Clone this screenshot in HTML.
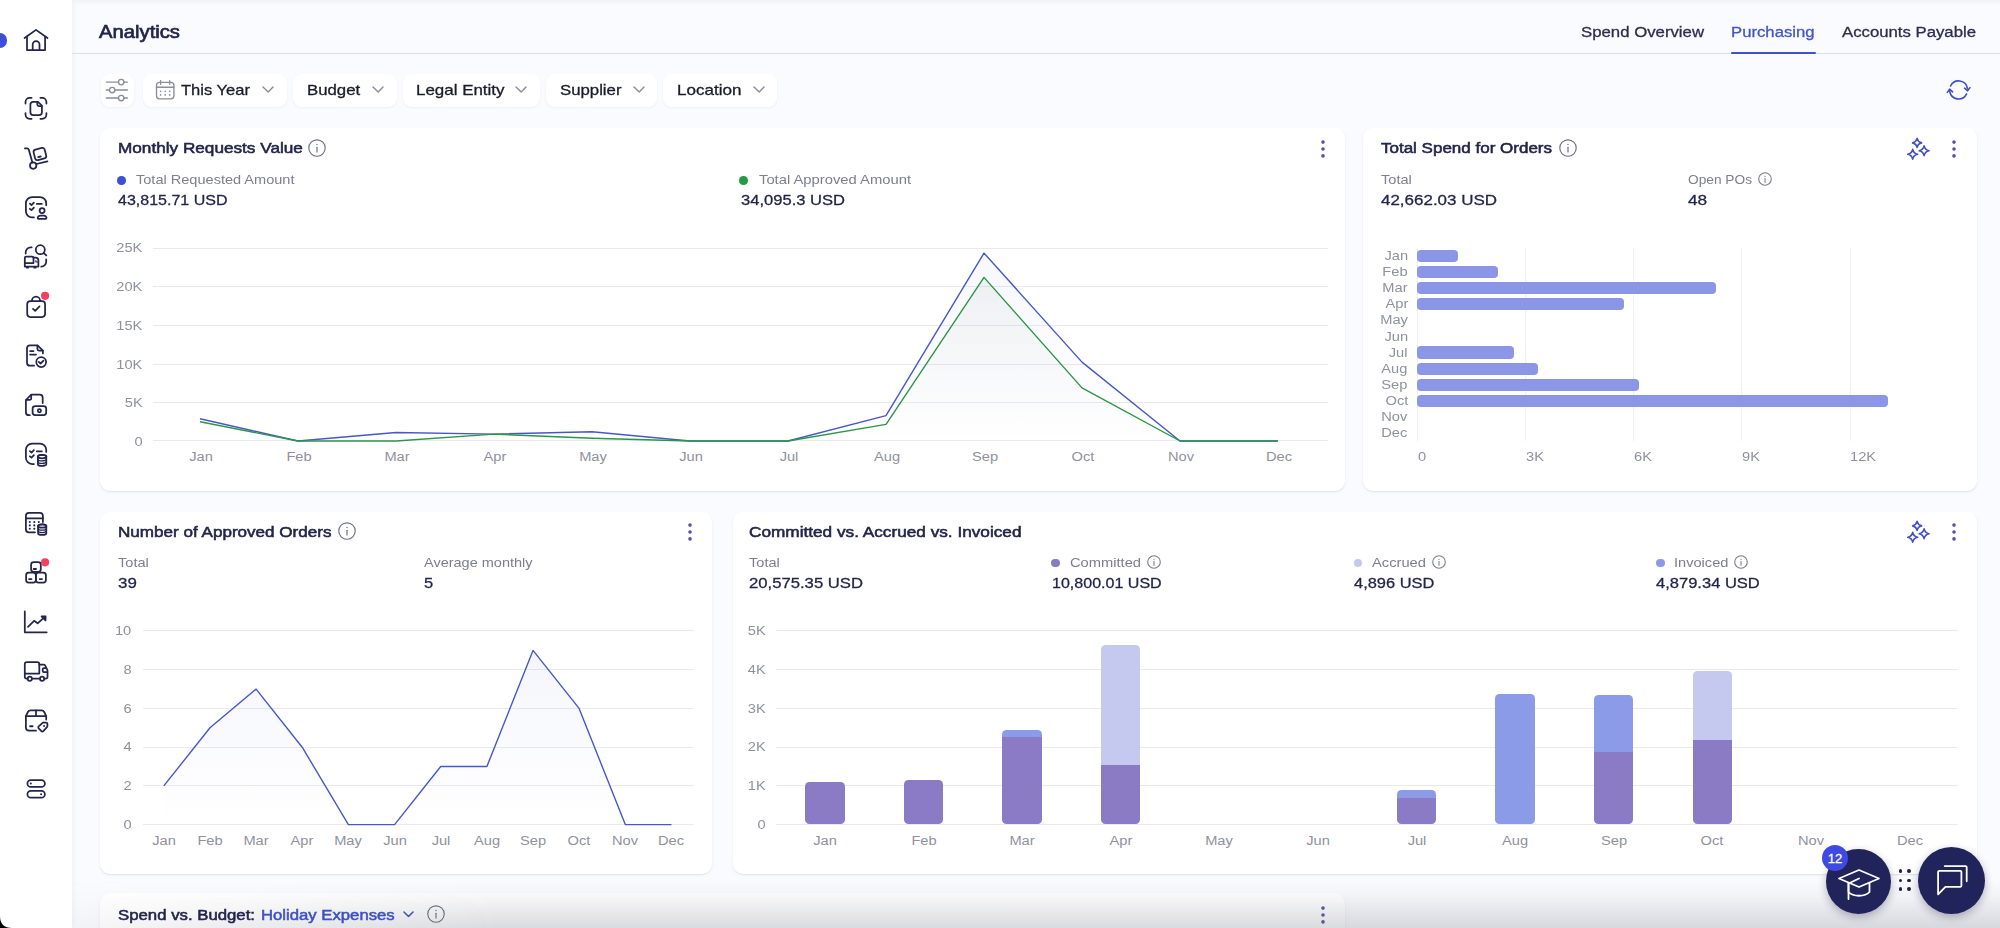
<!DOCTYPE html>
<html lang="en"><head><meta charset="utf-8"><title>Analytics</title>
<style>
html,body{margin:0;padding:0}
body{width:2000px;height:928px;overflow:hidden;position:relative;background:#fafbfe;font-family:"Liberation Sans", Arial, sans-serif;color:#22244b}
.abs{position:absolute}
.card{position:absolute;background:#fff;border-radius:10px;box-shadow:0 1px 1.5px rgba(60,62,80,.10),0 2px 6px rgba(60,62,90,.025)}
.chip{position:absolute;background:#fff;border-radius:9px;box-shadow:0 1px 2px rgba(60,62,80,.045),0 1px 5px rgba(60,62,90,.02)}
svg{position:absolute;overflow:visible}
</style></head><body>
<div class="abs" style="left:0;top:0;width:72px;height:928px;background:#fff;box-shadow:1px 0 6px rgba(40,45,90,.05)"></div>
<div class="abs" style="left:72px;top:53px;width:1928px;height:1px;background:#dcdee5"></div>
<div class="abs" style="left:72px;top:0;width:1928px;height:5px;background:linear-gradient(#f1f2f7,rgba(250,251,254,0))"></div>
<div class="abs" style="left:-7.5px;top:33px;width:14.5px;height:14.5px;border-radius:50%;background:#3d4fd6"></div>
<div class="abs" style="left:1731px;top:51.8px;width:84.5px;height:2.3px;background:#3f51c6;border-radius:1px"></div>
<div class="chip" style="left:100.5px;top:74px;width:33.5px;height:32.5px"></div>
<div class="chip" style="left:143px;top:74px;width:144px;height:32.5px"></div>
<div class="chip" style="left:293px;top:74px;width:104px;height:32.5px"></div>
<div class="chip" style="left:403px;top:74px;width:137px;height:32.5px"></div>
<div class="chip" style="left:546px;top:74px;width:111px;height:32.5px"></div>
<div class="chip" style="left:663px;top:74px;width:114px;height:32.5px"></div>
<svg style="left:262.2px;top:85.8px" width="12" height="7" viewBox="0 0 12 7"><path d="M1 1 L6.2 6.0 L11 1" fill="none" stroke="#8a8c99" stroke-width="1.4" stroke-linecap="round" stroke-linejoin="round"/></svg>
<svg style="left:371.8px;top:85.8px" width="12" height="7" viewBox="0 0 12 7"><path d="M1 1 L6.2 6.0 L11 1" fill="none" stroke="#8a8c99" stroke-width="1.4" stroke-linecap="round" stroke-linejoin="round"/></svg>
<svg style="left:515.2px;top:85.8px" width="12" height="7" viewBox="0 0 12 7"><path d="M1 1 L6.2 6.0 L11 1" fill="none" stroke="#8a8c99" stroke-width="1.4" stroke-linecap="round" stroke-linejoin="round"/></svg>
<svg style="left:632.8px;top:85.8px" width="12" height="7" viewBox="0 0 12 7"><path d="M1 1 L6.2 6.0 L11 1" fill="none" stroke="#8a8c99" stroke-width="1.4" stroke-linecap="round" stroke-linejoin="round"/></svg>
<svg style="left:752.8px;top:85.8px" width="12" height="7" viewBox="0 0 12 7"><path d="M1 1 L6.2 6.0 L11 1" fill="none" stroke="#8a8c99" stroke-width="1.4" stroke-linecap="round" stroke-linejoin="round"/></svg>
<div class="card" style="left:100px;top:127.5px;width:1244.5px;height:363px"></div>
<div class="card" style="left:1363px;top:127.5px;width:614px;height:363px"></div>
<div class="card" style="left:100px;top:511.5px;width:612px;height:362px"></div>
<div class="card" style="left:732.5px;top:511.5px;width:1244.5px;height:362px"></div>
<div class="card" style="left:100px;top:893px;width:1244.5px;height:80px"></div>
<svg style="left:304.5px;top:135.9px" width="24.0" height="24.0" viewBox="-12 -12 24 24"><circle r="8.2" fill="none" stroke="#6b6d84" stroke-width="1.15"/><circle cx="0" cy="-3.44" r="0.71" fill="#6b6d84"/><path d="M0 -0.66 V4.10" stroke="#6b6d84" stroke-width="1.15" stroke-linecap="round"/></svg>
<svg style="left:1318.5px;top:136.5px" width="8" height="24" viewBox="-4 -12 8 24"><circle cy="-6.9" r="1.8" fill="#5650a6"/><circle r="1.8" fill="#5650a6"/><circle cy="6.9" r="1.8" fill="#5650a6"/></svg>
<div class="abs" style="left:117.1px;top:176.1px;width:8.6px;height:8.6px;border-radius:50%;background:#3d4fd6"></div>
<div class="abs" style="left:739.3px;top:176.1px;width:8.6px;height:8.6px;border-radius:50%;background:#259a45"></div>
<div class="abs" style="left:152.5px;top:248.0px;width:1175.5px;height:1px;background:#e9eaef"></div>
<div class="abs" style="left:152.5px;top:286.0px;width:1175.5px;height:1px;background:#e9eaef"></div>
<div class="abs" style="left:152.5px;top:325.0px;width:1175.5px;height:1px;background:#e9eaef"></div>
<div class="abs" style="left:152.5px;top:364.0px;width:1175.5px;height:1px;background:#e9eaef"></div>
<div class="abs" style="left:152.5px;top:402.0px;width:1175.5px;height:1px;background:#e9eaef"></div>
<div class="abs" style="left:152.5px;top:440.0px;width:1175.5px;height:1px;background:#e9eaef"></div>
<svg style="left:0;top:0" width="2000" height="928" viewBox="0 0 2000 928"><defs><linearGradient id="gf1" x1="0" y1="0" x2="0" y2="1"><stop offset="0" stop-color="#7a8a80" stop-opacity=".085"/><stop offset="1" stop-color="#7a8a80" stop-opacity="0"/></linearGradient><linearGradient id="gf1b" x1="0" y1="0" x2="0" y2="1"><stop offset="0" stop-color="#5566cc" stop-opacity=".045"/><stop offset="1" stop-color="#5566cc" stop-opacity="0"/></linearGradient><linearGradient id="gf3" x1="0" y1="0" x2="0" y2="1"><stop offset="0" stop-color="#5566cc" stop-opacity=".06"/><stop offset="1" stop-color="#5566cc" stop-opacity="0"/></linearGradient></defs><polygon points="200.0,418.7 298.0,441.0 396.0,432.5 494.0,434.1 592.0,431.8 690.0,441.0 788.0,441.0 886.0,415.6 984.0,253.1 1082.0,362.1 1180.0,441.0 1278.0,441.0 1278,441 200,441" fill="url(#gf1b)"/><polygon points="200.0,421.8 298.0,441.0 396.0,441.0 494.0,434.1 592.0,438.3 690.0,441.0 788.0,441.0 886.0,424.4 984.0,277.4 1082.0,387.9 1180.0,441.0 1278.0,441.0 1278,441 200,441" fill="url(#gf1)"/><polyline points="200.0,418.7 298.0,441.0 396.0,432.5 494.0,434.1 592.0,431.8 690.0,441.0 788.0,441.0 886.0,415.6 984.0,253.1 1082.0,362.1 1180.0,441.0 1278.0,441.0" fill="none" stroke="#4658c8" stroke-width="1.4" stroke-linejoin="round"/><polyline points="200.0,421.8 298.0,441.0 396.0,441.0 494.0,434.1 592.0,438.3 690.0,441.0 788.0,441.0 886.0,424.4 984.0,277.4 1082.0,387.9 1180.0,441.0 1278.0,441.0" fill="none" stroke="#2c9547" stroke-width="1.4" stroke-linejoin="round"/></svg>
<svg style="left:1556.0px;top:135.9px" width="24.0" height="24.0" viewBox="-12 -12 24 24"><circle r="8.2" fill="none" stroke="#6b6d84" stroke-width="1.15"/><circle cx="0" cy="-3.44" r="0.71" fill="#6b6d84"/><path d="M0 -0.66 V4.10" stroke="#6b6d84" stroke-width="1.15" stroke-linecap="round"/></svg>
<svg style="left:1903.5px;top:134.5px" width="28" height="28" viewBox="-14 -14 28 28"><path d="M-0.90 -10.60 Q-0.09 -6.91 3.60 -6.10 Q-0.09 -5.29 -0.90 -1.60 Q-1.71 -5.29 -5.40 -6.10 Q-1.71 -6.91 -0.90 -10.60ZM6.10 -3.10 Q6.98 0.92 11.00 1.80 Q6.98 2.68 6.10 6.70 Q5.22 2.68 1.20 1.80 Q5.22 0.92 6.10 -3.10ZM-5.30 0.40 Q-4.42 4.42 -0.40 5.30 Q-4.42 6.18 -5.30 10.20 Q-6.18 6.18 -10.20 5.30 Q-6.18 4.42 -5.30 0.40Z" fill="none" stroke="#3f4fc4" stroke-width="1.6" stroke-linejoin="round"/></svg>
<svg style="left:1949.5px;top:136.5px" width="8" height="24" viewBox="-4 -12 8 24"><circle cy="-6.9" r="1.8" fill="#5650a6"/><circle r="1.8" fill="#5650a6"/><circle cy="6.9" r="1.8" fill="#5650a6"/></svg>
<svg style="left:1753.2px;top:167.2px" width="24.0" height="24.0" viewBox="-12 -12 24 24"><circle r="6.3" fill="none" stroke="#7b7d8d" stroke-width="1.10"/><circle cx="0" cy="-2.65" r="0.68" fill="#7b7d8d"/><path d="M0 -0.50 V3.15" stroke="#7b7d8d" stroke-width="1.10" stroke-linecap="round"/></svg>
<div class="abs" style="left:1417px;top:248px;width:1px;height:193px;background:#f0f1f5"></div>
<div class="abs" style="left:1525px;top:248px;width:1px;height:193px;background:#f0f1f5"></div>
<div class="abs" style="left:1633px;top:248px;width:1px;height:193px;background:#f0f1f5"></div>
<div class="abs" style="left:1741px;top:248px;width:1px;height:193px;background:#f0f1f5"></div>
<div class="abs" style="left:1850px;top:248px;width:1px;height:193px;background:#f0f1f5"></div>
<div class="abs" style="left:1416.8px;top:249.6px;width:41.1px;height:12.4px;border-radius:4px;background:#8b96e6"></div>
<div class="abs" style="left:1416.8px;top:265.7px;width:81.1px;height:12.4px;border-radius:4px;background:#8b96e6"></div>
<div class="abs" style="left:1416.8px;top:281.9px;width:299.2px;height:12.4px;border-radius:4px;background:#8b96e6"></div>
<div class="abs" style="left:1416.8px;top:298.0px;width:206.8px;height:12.4px;border-radius:4px;background:#8b96e6"></div>
<div class="abs" style="left:1416.8px;top:346.4px;width:97.2px;height:12.4px;border-radius:4px;background:#8b96e6"></div>
<div class="abs" style="left:1416.8px;top:362.5px;width:121.7px;height:12.4px;border-radius:4px;background:#8b96e6"></div>
<div class="abs" style="left:1416.8px;top:378.6px;width:222.2px;height:12.4px;border-radius:4px;background:#8b96e6"></div>
<div class="abs" style="left:1416.8px;top:394.8px;width:471.1px;height:12.4px;border-radius:4px;background:#8b96e6"></div>
<svg style="left:334.8px;top:519.2px" width="24.0" height="24.0" viewBox="-12 -12 24 24"><circle r="8.2" fill="none" stroke="#6b6d84" stroke-width="1.15"/><circle cx="0" cy="-3.44" r="0.71" fill="#6b6d84"/><path d="M0 -0.66 V4.10" stroke="#6b6d84" stroke-width="1.15" stroke-linecap="round"/></svg>
<svg style="left:685.8px;top:519.8px" width="8" height="24" viewBox="-4 -12 8 24"><circle cy="-6.9" r="1.8" fill="#5650a6"/><circle r="1.8" fill="#5650a6"/><circle cy="6.9" r="1.8" fill="#5650a6"/></svg>
<div class="abs" style="left:143.0px;top:630.0px;width:551.0px;height:1px;background:#e9eaef"></div>
<div class="abs" style="left:143.0px;top:669.0px;width:551.0px;height:1px;background:#e9eaef"></div>
<div class="abs" style="left:143.0px;top:708.0px;width:551.0px;height:1px;background:#e9eaef"></div>
<div class="abs" style="left:143.0px;top:747.0px;width:551.0px;height:1px;background:#e9eaef"></div>
<div class="abs" style="left:143.0px;top:785.0px;width:551.0px;height:1px;background:#e9eaef"></div>
<div class="abs" style="left:143.0px;top:824.0px;width:551.0px;height:1px;background:#e9eaef"></div>
<svg style="left:0;top:0" width="2000" height="928" viewBox="0 0 2000 928"><polygon points="163.8,785.9 210.0,727.8 256.1,689.1 302.2,747.2 348.4,824.6 394.6,824.6 440.7,766.5 486.9,766.5 533.0,650.4 579.1,708.4 625.3,824.6 671.5,824.6 671.5,824.6 163.8,824.6" fill="url(#gf3)"/><polyline points="163.8,785.9 210.0,727.8 256.1,689.1 302.2,747.2 348.4,824.6 394.6,824.6 440.7,766.5 486.9,766.5 533.0,650.4 579.1,708.4 625.3,824.6 671.5,824.6" fill="none" stroke="#4658c8" stroke-width="1.4" stroke-linejoin="round"/></svg>
<svg style="left:1903.5px;top:517.8px" width="28" height="28" viewBox="-14 -14 28 28"><path d="M-0.90 -10.60 Q-0.09 -6.91 3.60 -6.10 Q-0.09 -5.29 -0.90 -1.60 Q-1.71 -5.29 -5.40 -6.10 Q-1.71 -6.91 -0.90 -10.60ZM6.10 -3.10 Q6.98 0.92 11.00 1.80 Q6.98 2.68 6.10 6.70 Q5.22 2.68 1.20 1.80 Q5.22 0.92 6.10 -3.10ZM-5.30 0.40 Q-4.42 4.42 -0.40 5.30 Q-4.42 6.18 -5.30 10.20 Q-6.18 6.18 -10.20 5.30 Q-6.18 4.42 -5.30 0.40Z" fill="none" stroke="#3f4fc4" stroke-width="1.6" stroke-linejoin="round"/></svg>
<svg style="left:1949.5px;top:519.8px" width="8" height="24" viewBox="-4 -12 8 24"><circle cy="-6.9" r="1.8" fill="#5650a6"/><circle r="1.8" fill="#5650a6"/><circle cy="6.9" r="1.8" fill="#5650a6"/></svg>
<div class="abs" style="left:1051.4px;top:559.0px;width:8.4px;height:8.4px;border-radius:50%;background:#8b7bc4"></div>
<svg style="left:1142.3px;top:549.9px" width="24.0" height="24.0" viewBox="-12 -12 24 24"><circle r="6.3" fill="none" stroke="#7b7d8d" stroke-width="1.10"/><circle cx="0" cy="-2.65" r="0.68" fill="#7b7d8d"/><path d="M0 -0.50 V3.15" stroke="#7b7d8d" stroke-width="1.10" stroke-linecap="round"/></svg>
<div class="abs" style="left:1353.8px;top:559.0px;width:8.4px;height:8.4px;border-radius:50%;background:#c5c9f0"></div>
<svg style="left:1427.1px;top:549.9px" width="24.0" height="24.0" viewBox="-12 -12 24 24"><circle r="6.3" fill="none" stroke="#7b7d8d" stroke-width="1.10"/><circle cx="0" cy="-2.65" r="0.68" fill="#7b7d8d"/><path d="M0 -0.50 V3.15" stroke="#7b7d8d" stroke-width="1.10" stroke-linecap="round"/></svg>
<div class="abs" style="left:1656.4px;top:559.0px;width:8.4px;height:8.4px;border-radius:50%;background:#8b9be8"></div>
<svg style="left:1729.3px;top:549.9px" width="24.0" height="24.0" viewBox="-12 -12 24 24"><circle r="6.3" fill="none" stroke="#7b7d8d" stroke-width="1.10"/><circle cx="0" cy="-2.65" r="0.68" fill="#7b7d8d"/><path d="M0 -0.50 V3.15" stroke="#7b7d8d" stroke-width="1.10" stroke-linecap="round"/></svg>
<div class="abs" style="left:776.0px;top:630.0px;width:1182.0px;height:1px;background:#e9eaef"></div>
<div class="abs" style="left:776.0px;top:669.0px;width:1182.0px;height:1px;background:#e9eaef"></div>
<div class="abs" style="left:776.0px;top:708.0px;width:1182.0px;height:1px;background:#e9eaef"></div>
<div class="abs" style="left:776.0px;top:747.0px;width:1182.0px;height:1px;background:#e9eaef"></div>
<div class="abs" style="left:776.0px;top:785.0px;width:1182.0px;height:1px;background:#e9eaef"></div>
<div class="abs" style="left:776.0px;top:824.0px;width:1182.0px;height:1px;background:#e9eaef"></div>
<div class="abs" style="left:805.2px;top:782.0px;width:39.4px;height:41.9px;border-radius:4.5px;overflow:hidden"><div class="abs" style="left:0;top:0.0px;width:100%;height:41.9px;background:#8b7bc4"></div></div>
<div class="abs" style="left:903.8px;top:780.3px;width:39.4px;height:43.6px;border-radius:4.5px;overflow:hidden"><div class="abs" style="left:0;top:0.0px;width:100%;height:43.6px;background:#8b7bc4"></div></div>
<div class="abs" style="left:1002.4px;top:729.6px;width:39.4px;height:94.3px;border-radius:4.5px;overflow:hidden"><div class="abs" style="left:0;top:7.4px;width:100%;height:86.9px;background:#8b7bc4"></div><div class="abs" style="left:0;top:0.0px;width:100%;height:7.4px;background:#8b9be8"></div></div>
<div class="abs" style="left:1101.0px;top:645.2px;width:39.4px;height:178.7px;border-radius:4.5px;overflow:hidden"><div class="abs" style="left:0;top:119.4px;width:100%;height:59.3px;background:#8b7bc4"></div><div class="abs" style="left:0;top:0.0px;width:100%;height:119.4px;background:#c5c9f0"></div></div>
<div class="abs" style="left:1396.8px;top:790.0px;width:39.4px;height:33.9px;border-radius:4.5px;overflow:hidden"><div class="abs" style="left:0;top:7.5px;width:100%;height:26.4px;background:#8b7bc4"></div><div class="abs" style="left:0;top:0.0px;width:100%;height:7.5px;background:#8b9be8"></div></div>
<div class="abs" style="left:1495.4px;top:694.2px;width:39.4px;height:129.7px;border-radius:4.5px;overflow:hidden"><div class="abs" style="left:0;top:0.0px;width:100%;height:129.7px;background:#8b9be8"></div></div>
<div class="abs" style="left:1594.0px;top:695.0px;width:39.4px;height:128.9px;border-radius:4.5px;overflow:hidden"><div class="abs" style="left:0;top:56.8px;width:100%;height:72.1px;background:#8b7bc4"></div><div class="abs" style="left:0;top:0.0px;width:100%;height:56.8px;background:#8b9be8"></div></div>
<div class="abs" style="left:1692.6px;top:670.7px;width:39.4px;height:153.2px;border-radius:4.5px;overflow:hidden"><div class="abs" style="left:0;top:69.2px;width:100%;height:84.0px;background:#8b7bc4"></div><div class="abs" style="left:0;top:0.0px;width:100%;height:69.2px;background:#c5c9f0"></div></div>
<svg style="left:402.5px;top:911.2px" width="11" height="6" viewBox="0 0 11 6"><path d="M1 1 L5.5 5.5 L10 1" fill="none" stroke="#3f51c6" stroke-width="1.6" stroke-linecap="round" stroke-linejoin="round"/></svg>
<svg style="left:424.2px;top:901.9px" width="24.0" height="24.0" viewBox="-12 -12 24 24"><circle r="8.2" fill="none" stroke="#6b6d84" stroke-width="1.15"/><circle cx="0" cy="-3.44" r="0.71" fill="#6b6d84"/><path d="M0 -0.66 V4.10" stroke="#6b6d84" stroke-width="1.15" stroke-linecap="round"/></svg>
<svg style="left:1318.5px;top:902.5px" width="8" height="24" viewBox="-4 -12 8 24"><circle cy="-6.9" r="1.8" fill="#5650a6"/><circle r="1.8" fill="#5650a6"/><circle cy="6.9" r="1.8" fill="#5650a6"/></svg>
<div class="abs" style="left:72px;top:880px;width:1928px;height:48px;background:linear-gradient(rgba(110,112,125,0),rgba(110,112,125,.06) 35%,rgba(110,112,125,.25));-webkit-mask-image:linear-gradient(to right,rgba(0,0,0,.2),#000 22%);mask-image:linear-gradient(to right,rgba(0,0,0,.2),#000 22%);pointer-events:none"></div>
<svg style="left:0;top:916px" width="12" height="12" viewBox="0 0 12 12"><path d="M0 0 Q0 12 12 12 H0Z" fill="#000"/></svg>
<div class="abs" style="left:1825.5px;top:849.0px;width:65px;height:65px;border-radius:50%;background:#20245a;box-shadow:0 3px 8px rgba(20,22,60,.3)"></div>
<div class="abs" style="left:1918.1px;top:847.0px;width:67px;height:67px;border-radius:50%;background:#20245a;box-shadow:0 3px 8px rgba(20,22,60,.3)"></div>
<div class="abs" style="left:1822.0px;top:845.1px;width:26.4px;height:26.4px;border-radius:50%;background:#3f4ae4"></div>
<div class="abs" style="left:1898.5px;top:869.4px;width:3.8px;height:3.8px;border-radius:50%;background:#1e2150"></div>
<div class="abs" style="left:1898.5px;top:878.6px;width:3.8px;height:3.8px;border-radius:50%;background:#1e2150"></div>
<div class="abs" style="left:1898.5px;top:886.9px;width:3.8px;height:3.8px;border-radius:50%;background:#1e2150"></div>
<div class="abs" style="left:1906.8px;top:869.4px;width:3.8px;height:3.8px;border-radius:50%;background:#1e2150"></div>
<div class="abs" style="left:1906.8px;top:878.6px;width:3.8px;height:3.8px;border-radius:50%;background:#1e2150"></div>
<div class="abs" style="left:1906.8px;top:886.9px;width:3.8px;height:3.8px;border-radius:50%;background:#1e2150"></div>
<svg style="left:1835.0px;top:863.0px" width="48" height="40" viewBox="-24 -20 48 40"><g fill="none" stroke="#fff" stroke-width="1.8" stroke-linejoin="round" stroke-linecap="round"><path d="M0 -13 L20 -4.5 L0 4 L-20 -4.5 Z"/><path d="M-10.5 0 V9 C-6 14 6 14 10.5 9 V0"/><path d="M0 -4.5 L-10.5 0.5 V16"/></g></svg>
<svg style="left:1931.6px;top:860.5px" width="40" height="40" viewBox="-20 -20 40 40"><g fill="none" stroke="#fff" stroke-width="1.8" stroke-linejoin="round" stroke-linecap="round"><path d="M-13.9 -9 a1.2 1.2 0 0 1 1.2 -1.2 H8.2 a1.2 1.2 0 0 1 1.2 1.2 V4.7 a1.2 1.2 0 0 1 -1.2 1.2 H-6.6 L-13.9 13.4 Z"/><path d="M-7.3 -14.9 H13.5 a1.2 1.2 0 0 1 1.2 1.2 V0.3"/></g></svg>
<svg style="left:0;top:0" width="72" height="928" viewBox="0 0 72 928"><g fill="none" stroke="#23254d" stroke-width="1.75" stroke-linecap="round" stroke-linejoin="round"><path d="M24.6 38 L36 29.9 L47.5 38"/><path d="M27 36.6 V50 H45.1 V36.6"/><path d="M32.7 50 V44.6 a3.4 3.4 0 0 1 6.8 0 V50"/><path d="M25.5 103.6 V102 a4.2 4.2 0 0 1 4.2 -4.2 H31.6"/><path d="M40.4 97.8 H42.2 a4.2 4.2 0 0 1 4.2 4.2 V103.6"/><path d="M46.4 113 V114.6 a4.2 4.2 0 0 1 -4.2 4.2 H40.4"/><path d="M31.6 118.8 H29.7 a4.2 4.2 0 0 1 -4.2 -4.2 V113"/><path d="M33.2 101.8 H38 L41.9 105.6 V112.2 a2.8 2.8 0 0 1 -2.8 2.8 H33.2 a2.8 2.8 0 0 1 -2.8 -2.8 V104.6 a2.8 2.8 0 0 1 2.8 -2.8Z"/><path d="M37.3 102 V104.4 a1.6 1.6 0 0 0 1.6 1.6 H41.6"/><path d="M24.9 148.4 H27.2 a1.6 1.6 0 0 1 1.55 1.2 L32.4 162.5"/><circle cx="33.2" cy="165.6" r="3.2"/><path d="M36.4 164 L47.4 161.4"/><rect x="-5.7" y="-5.4" width="11.4" height="10.8" rx="2.4" transform="translate(39.9 154) rotate(-14)"/><path d="M38.2 157.1 L40.6 156.5" stroke-width="2"/><path d="M46.2 205.35 V203.25 a6.2 6.2 0 0 0 -6.2 -6.2 H32.1 a6.2 6.2 0 0 0 -6.2 6.2 v8 a6.2 6.2 0 0 0 6.2 6.2 H33.9"/><path d="M29.9 203.70 l1.6 1.4 l2.4 -2.5"/><path d="M29.9 208.80 l1.6 1.4 l2.4 -2.5"/><path d="M36.8 203.90 H41.8"/><circle cx="42.1" cy="210.6" r="2.5"/><path d="M40.3 215.5 H43.9 a2.6 2.6 0 0 1 2.6 2.6 a0.8 0.8 0 0 1 -0.8 0.8 H38.5 a0.8 0.8 0 0 1 -0.8 -0.8 a2.6 2.6 0 0 1 2.6 -2.6Z"/><path d="M25.7 253.6 V252.3 a5 5 0 0 1 5 -5 H31.7"/><circle cx="40.3" cy="249.7" r="4.5"/><path d="M43.6 253 L46.3 255.4"/><path d="M46.2 259.4 V261.7 a5 5 0 0 1 -5 5 H41.2"/><path d="M24.8 258 a1.4 1.4 0 0 1 1.4 -1.4 H32.1 a1.4 1.4 0 0 1 1.4 1.4 V263 H24.8Z"/><path d="M33.5 257.7 H35.6 a2.8 2.8 0 0 1 2.8 2.8 V266.6 H24.8 V263"/><path d="M26.6 267.7 H28.4 M34 267.7 H35.8" stroke-width="1.5"/><path d="M35.9 260.6 V262 H37.6" stroke-width="1.1"/><rect x="27.2" y="301" width="17.9" height="16" rx="3.2"/><path d="M31.9 301 a4.1 4.3 0 0 1 8.2 0"/><path d="M33 308.8 L35.2 310.9 L39.5 306.4"/><path d="M42.9 353.4 V350.6 L37.6 345.3 H30 a3 3 0 0 0 -3 3 V362.7 a3 3 0 0 0 3 3 H34.1"/><path d="M37.4 345.6 V349 a1.5 1.5 0 0 0 1.5 1.5 H42.6"/><path d="M30.1 351.1 H33.5 M30.1 354.6 H36"/><circle cx="41.2" cy="362.1" r="4.9"/><path d="M38.8 361.9 L40.6 363.5 L43.5 360.7"/><path d="M42.7 403 V397.7 a3 3 0 0 0 -3 -3 H31.2 L25.9 400 V412.2 a3 3 0 0 0 3 3 H29.8"/><path d="M31.2 395 V398.4 a1.5 1.5 0 0 1 -1.5 1.5 H26.2"/><rect x="32.6" y="406.1" width="13.6" height="9.1" rx="2.6"/><circle cx="39.4" cy="410.7" r="1.6"/><path d="M46.2 451.90 V449.80 a6.2 6.2 0 0 0 -6.2 -6.2 H32.1 a6.2 6.2 0 0 0 -6.2 6.2 v8 a6.2 6.2 0 0 0 6.2 6.2 H33.9"/><path d="M29.9 451.20 l1.6 1.4 l2.4 -2.5"/><path d="M29.9 456.30 l1.6 1.4 l2.4 -2.5"/><path d="M36.8 451.40 H41.8"/><ellipse cx="42.10" cy="456.60" rx="4.20" ry="1.70" fill="#fff"/><path d="M37.90 456.60 V464.20 A4.20 1.70 0 0 0 46.30 464.20 V456.60" fill="#fff"/><ellipse cx="42.10" cy="456.60" rx="4.20" ry="1.70"/><path d="M37.90 459.13 A4.20 1.70 0 0 0 46.30 459.13" stroke-width="1.3"/><path d="M37.90 461.67 A4.20 1.70 0 0 0 46.30 461.67" stroke-width="1.3"/><path d="M42.9 522 V515.9 a3 3 0 0 0 -3 -3 H28.9 a3 3 0 0 0 -3 3 V529.3 a3 3 0 0 0 3 3 H35"/><path d="M25.9 518.3 H42.9"/><circle cx="29.8" cy="522.0" r="1.05" fill="#23254d" stroke="none"/><circle cx="34.3" cy="522.0" r="1.05" fill="#23254d" stroke="none"/><circle cx="38.8" cy="522.0" r="1.05" fill="#23254d" stroke="none"/><circle cx="29.8" cy="525.4" r="1.05" fill="#23254d" stroke="none"/><circle cx="34.3" cy="525.4" r="1.05" fill="#23254d" stroke="none"/><circle cx="29.8" cy="528.7" r="1.05" fill="#23254d" stroke="none"/><circle cx="34.3" cy="528.7" r="1.05" fill="#23254d" stroke="none"/><ellipse cx="42.20" cy="526.00" rx="4.10" ry="1.70" fill="#fff"/><path d="M38.10 526.00 V533.30 A4.10 1.70 0 0 0 46.30 533.30 V526.00" fill="#fff"/><ellipse cx="42.20" cy="526.00" rx="4.10" ry="1.70"/><path d="M38.10 528.43 A4.10 1.70 0 0 0 46.30 528.43" stroke-width="1.3"/><path d="M38.10 530.87 A4.10 1.70 0 0 0 46.30 530.87" stroke-width="1.3"/><rect x="31.1" y="562" width="9.7" height="9.8" rx="2.6"/><rect x="26.1" y="572.6" width="9.8" height="10" rx="2.6"/><rect x="35.9" y="572.6" width="10" height="10" rx="2.6"/><path d="M33.7 569 H36 M29.1 579.1 H31.4 M39.7 579.1 H42" stroke-width="1.9"/><path d="M24.8 611.3 V632.3 H46.7"/><path d="M28 626.9 L34.1 620.8 L37.6 623.3 L44.6 617.2"/><path d="M41.6 616.3 L45.6 616.4 L45.5 620.4Z" fill="#23254d"/><path d="M24.8 673.6 V664.2 a2 2 0 0 1 2 -2 H37.3 a2 2 0 0 1 2 2 V673.6Z"/><path d="M24.8 673.6 V677 a1.6 1.6 0 0 0 1.6 1.6 H27.6 M32 678.6 H39.9 M44.3 678.6 H45.9 a1.6 1.6 0 0 0 1.6 -1.6 V670.4 L45.3 665.7 a1.8 1.8 0 0 0 -1.6 -1.1 H39.3"/><circle cx="29.8" cy="678.8" r="2.1"/><circle cx="42.1" cy="678.8" r="2.1"/><path d="M47.3 672.2 H43.9 a1.2 1.2 0 0 1 -1.2 -1.2 V669.2 a1.2 1.2 0 0 1 1.2 -1.2 H46.2"/><path d="M46.2 719.5 V716.1 L44.2 712 a3 3 0 0 0 -2.7 -1.7 H30.6 a3 3 0 0 0 -2.7 1.7 L25.9 716.1 V727.5 a3.2 3.2 0 0 0 3.2 3.2 H36"/><path d="M25.9 716.1 H46.2 M36 710.3 V716.1"/><path d="M30.1 726.3 H32.6" stroke-width="1.9"/><path d="M38.7 726.4 L42.6 722.9 a1.6 1.6 0 0 1 1.1 -0.4 H46 a1.4 1.4 0 0 1 1.4 1.4 V726 a1.6 1.6 0 0 1 -0.45 1.1 L43.3 731.2 a1.3 1.3 0 0 1 -1.9 0 L38.7 728.3 a1.3 1.3 0 0 1 0 -1.9Z"/><circle cx="44.1" cy="726" r="0.95" fill="#23254d" stroke="none"/><rect x="27.4" y="780" width="17.5" height="6.9" rx="3.45"/><rect x="27.4" y="790.8" width="17.5" height="6.9" rx="3.45"/><circle cx="30.8" cy="783.45" r="1.05" fill="#23254d" stroke="none"/><circle cx="41.1" cy="794.25" r="1.05" fill="#23254d" stroke="none"/></g><circle cx="45.1" cy="295.8" r="4.1" fill="#f4405f"/><circle cx="45.1" cy="562.3" r="4.1" fill="#f4405f"/></svg>
<svg style="left:0;top:0" width="300" height="120" viewBox="0 0 300 120"><g fill="none" stroke="#8b8d99" stroke-width="1.35" stroke-linecap="round" stroke-linejoin="round"><path d="M106.3 82.1 H118.4 M124 82.1 H127.4 M106.3 90 H109.4 M115 90 H127.4 M106.3 98 H118.4 M124 98 H127.4"/><circle cx="121.2" cy="82.1" r="2.7"/><circle cx="112.2" cy="90" r="2.7"/><circle cx="121.2" cy="98" r="2.7"/><rect x="156.5" y="82.3" width="17.4" height="16.5" rx="3"/><path d="M156.5 87.2 H173.9 M160.6 80.7 V84.2 M169.7 80.7 V84.2"/></g><circle cx="160.6" cy="91.3" r="0.85" fill="#8b8d99"/><circle cx="160.6" cy="94.9" r="0.85" fill="#8b8d99"/><circle cx="165.2" cy="91.3" r="0.85" fill="#8b8d99"/><circle cx="165.2" cy="94.9" r="0.85" fill="#8b8d99"/><circle cx="169.7" cy="91.3" r="0.85" fill="#8b8d99"/><circle cx="169.7" cy="94.9" r="0.85" fill="#8b8d99"/></svg>
<svg style="left:1940px;top:72px" width="36" height="36" viewBox="1940 72 36 36"><g fill="none" stroke="#3f4fc4" stroke-width="1.6" stroke-linecap="round" stroke-linejoin="round"><path d="M1950.6 86 A8.9 8.9 0 0 1 1967.4 88.4"/><path d="M1964.6 88.2 L1967.6 90.8 L1969.9 87.6"/><path d="M1966.6 93.9 A8.9 8.9 0 0 1 1949.8 91.5"/><path d="M1952.6 91.8 L1949.6 89.2 L1947.3 92.4"/></g></svg>
<span id="t0" style="position:absolute;white-space:nowrap;line-height:1;top:23.22px;font-size:18.40px;font-weight:400;color:#22244b;-webkit-text-stroke:0.65px #22244b;left:99.00px;transform-origin:0 84.6%;transform:scale(1.1006,1.000);">Analytics</span>
<span id="t1" style="position:absolute;white-space:nowrap;line-height:1;top:24.35px;font-size:15.30px;font-weight:400;color:#2c2e4e;-webkit-text-stroke:0.30px #2c2e4e;left:1580.50px;transform-origin:0 84.6%;transform:scale(1.0959,1.000);">Spend Overview</span>
<span id="t2" style="position:absolute;white-space:nowrap;line-height:1;top:24.35px;font-size:15.30px;font-weight:400;color:#4355c8;-webkit-text-stroke:0.30px #4355c8;left:1731.30px;transform-origin:0 84.6%;transform:scale(1.0924,1.000);">Purchasing</span>
<span id="t3" style="position:absolute;white-space:nowrap;line-height:1;top:24.35px;font-size:15.30px;font-weight:400;color:#2c2e4e;-webkit-text-stroke:0.30px #2c2e4e;left:1842.40px;transform-origin:0 84.6%;transform:scale(1.0943,1.000);">Accounts Payable</span>
<span id="t4" style="position:absolute;white-space:nowrap;line-height:1;top:82.67px;font-size:14.80px;font-weight:400;color:#1b1c2a;-webkit-text-stroke:0.30px #1b1c2a;left:181.30px;transform-origin:0 84.6%;transform:scale(1.1166,1.000);">This Year</span>
<span id="t5" style="position:absolute;white-space:nowrap;line-height:1;top:82.67px;font-size:14.80px;font-weight:400;color:#1b1c2a;-webkit-text-stroke:0.30px #1b1c2a;left:306.60px;transform-origin:0 84.6%;transform:scale(1.1342,1.000);">Budget</span>
<span id="t6" style="position:absolute;white-space:nowrap;line-height:1;top:82.67px;font-size:14.80px;font-weight:400;color:#1b1c2a;-webkit-text-stroke:0.30px #1b1c2a;left:415.50px;transform-origin:0 84.6%;transform:scale(1.1445,1.000);">Legal Entity</span>
<span id="t7" style="position:absolute;white-space:nowrap;line-height:1;top:82.67px;font-size:14.80px;font-weight:400;color:#1b1c2a;-webkit-text-stroke:0.30px #1b1c2a;left:559.50px;transform-origin:0 84.6%;transform:scale(1.1327,1.000);">Supplier</span>
<span id="t8" style="position:absolute;white-space:nowrap;line-height:1;top:82.67px;font-size:14.80px;font-weight:400;color:#1b1c2a;-webkit-text-stroke:0.30px #1b1c2a;left:677.00px;transform-origin:0 84.6%;transform:scale(1.1528,1.000);">Location</span>
<span id="t9" style="position:absolute;white-space:nowrap;line-height:1;top:140.18px;font-size:15.50px;font-weight:400;color:#22244b;-webkit-text-stroke:0.55px #22244b;left:117.50px;transform-origin:0 84.6%;transform:scale(1.1080,1.000);">Monthly Requests Value</span>
<span id="t10" style="position:absolute;white-space:nowrap;line-height:1;top:174.15px;font-size:12.70px;font-weight:400;color:#7e7d92;left:135.50px;transform-origin:0 84.6%;transform:scale(1.1465,1.000);">Total Requested Amount</span>
<span id="t11" style="position:absolute;white-space:nowrap;line-height:1;top:192.26px;font-size:15.40px;font-weight:400;color:#22244b;-webkit-text-stroke:0.28px #22244b;left:117.50px;transform-origin:0 84.6%;transform:scale(1.0404,1.000);">43,815.71 USD</span>
<span id="t12" style="position:absolute;white-space:nowrap;line-height:1;top:174.15px;font-size:12.70px;font-weight:400;color:#7e7d92;left:758.50px;transform-origin:0 84.6%;transform:scale(1.1649,1.000);">Total Approved Amount</span>
<span id="t13" style="position:absolute;white-space:nowrap;line-height:1;top:192.26px;font-size:15.40px;font-weight:400;color:#22244b;-webkit-text-stroke:0.28px #22244b;left:740.50px;transform-origin:0 84.6%;transform:scale(1.0756,1.000);">34,095.3 USD</span>
<span id="t14" style="position:absolute;white-space:nowrap;line-height:1;top:241.40px;font-size:13.70px;font-weight:400;color:#8f919d;right:1857.50px;transform-origin:100% 84.6%;transform:scale(1.0700,1.000);">25K</span>
<span id="t15" style="position:absolute;white-space:nowrap;line-height:1;top:279.90px;font-size:13.70px;font-weight:400;color:#8f919d;right:1857.50px;transform-origin:100% 84.6%;transform:scale(1.0700,1.000);">20K</span>
<span id="t16" style="position:absolute;white-space:nowrap;line-height:1;top:318.90px;font-size:13.70px;font-weight:400;color:#8f919d;right:1857.50px;transform-origin:100% 84.6%;transform:scale(1.0700,1.000);">15K</span>
<span id="t17" style="position:absolute;white-space:nowrap;line-height:1;top:357.90px;font-size:13.70px;font-weight:400;color:#8f919d;right:1857.50px;transform-origin:100% 84.6%;transform:scale(1.0700,1.000);">10K</span>
<span id="t18" style="position:absolute;white-space:nowrap;line-height:1;top:396.40px;font-size:13.70px;font-weight:400;color:#8f919d;right:1857.50px;transform-origin:100% 84.6%;transform:scale(1.0700,1.000);">5K</span>
<span id="t19" style="position:absolute;white-space:nowrap;line-height:1;top:435.40px;font-size:13.70px;font-weight:400;color:#8f919d;right:1857.50px;transform-origin:100% 84.6%;transform:scale(1.0700,1.000);">0</span>
<span id="t20" style="position:absolute;white-space:nowrap;line-height:1;top:450.10px;font-size:13.70px;font-weight:400;color:#8f919d;left:200.50px;transform-origin:50% 84.6%;transform:translateX(-50%) scale(1.0700,1.000);">Jan</span>
<span id="t21" style="position:absolute;white-space:nowrap;line-height:1;top:450.10px;font-size:13.70px;font-weight:400;color:#8f919d;left:298.50px;transform-origin:50% 84.6%;transform:translateX(-50%) scale(1.0700,1.000);">Feb</span>
<span id="t22" style="position:absolute;white-space:nowrap;line-height:1;top:450.10px;font-size:13.70px;font-weight:400;color:#8f919d;left:396.50px;transform-origin:50% 84.6%;transform:translateX(-50%) scale(1.0700,1.000);">Mar</span>
<span id="t23" style="position:absolute;white-space:nowrap;line-height:1;top:450.10px;font-size:13.70px;font-weight:400;color:#8f919d;left:494.50px;transform-origin:50% 84.6%;transform:translateX(-50%) scale(1.0700,1.000);">Apr</span>
<span id="t24" style="position:absolute;white-space:nowrap;line-height:1;top:450.10px;font-size:13.70px;font-weight:400;color:#8f919d;left:592.50px;transform-origin:50% 84.6%;transform:translateX(-50%) scale(1.0700,1.000);">May</span>
<span id="t25" style="position:absolute;white-space:nowrap;line-height:1;top:450.10px;font-size:13.70px;font-weight:400;color:#8f919d;left:690.50px;transform-origin:50% 84.6%;transform:translateX(-50%) scale(1.0700,1.000);">Jun</span>
<span id="t26" style="position:absolute;white-space:nowrap;line-height:1;top:450.10px;font-size:13.70px;font-weight:400;color:#8f919d;left:788.50px;transform-origin:50% 84.6%;transform:translateX(-50%) scale(1.0700,1.000);">Jul</span>
<span id="t27" style="position:absolute;white-space:nowrap;line-height:1;top:450.10px;font-size:13.70px;font-weight:400;color:#8f919d;left:886.50px;transform-origin:50% 84.6%;transform:translateX(-50%) scale(1.0700,1.000);">Aug</span>
<span id="t28" style="position:absolute;white-space:nowrap;line-height:1;top:450.10px;font-size:13.70px;font-weight:400;color:#8f919d;left:984.50px;transform-origin:50% 84.6%;transform:translateX(-50%) scale(1.0700,1.000);">Sep</span>
<span id="t29" style="position:absolute;white-space:nowrap;line-height:1;top:450.10px;font-size:13.70px;font-weight:400;color:#8f919d;left:1082.50px;transform-origin:50% 84.6%;transform:translateX(-50%) scale(1.0700,1.000);">Oct</span>
<span id="t30" style="position:absolute;white-space:nowrap;line-height:1;top:450.10px;font-size:13.70px;font-weight:400;color:#8f919d;left:1180.50px;transform-origin:50% 84.6%;transform:translateX(-50%) scale(1.0700,1.000);">Nov</span>
<span id="t31" style="position:absolute;white-space:nowrap;line-height:1;top:450.10px;font-size:13.70px;font-weight:400;color:#8f919d;left:1278.50px;transform-origin:50% 84.6%;transform:translateX(-50%) scale(1.0700,1.000);">Dec</span>
<span id="t32" style="position:absolute;white-space:nowrap;line-height:1;top:140.18px;font-size:15.50px;font-weight:400;color:#22244b;-webkit-text-stroke:0.55px #22244b;left:1381.00px;transform-origin:0 84.6%;transform:scale(1.0965,1.000);">Total Spend for Orders</span>
<span id="t33" style="position:absolute;white-space:nowrap;line-height:1;top:174.15px;font-size:12.70px;font-weight:400;color:#7e7d92;left:1381.00px;transform-origin:0 84.6%;transform:scale(1.1487,1.000);">Total</span>
<span id="t34" style="position:absolute;white-space:nowrap;line-height:1;top:192.26px;font-size:15.40px;font-weight:400;color:#22244b;-webkit-text-stroke:0.28px #22244b;left:1381.00px;transform-origin:0 84.6%;transform:scale(1.1021,1.000);">42,662.03 USD</span>
<span id="t35" style="position:absolute;white-space:nowrap;line-height:1;top:174.15px;font-size:12.70px;font-weight:400;color:#7e7d92;left:1688.00px;transform-origin:0 84.6%;transform:scale(1.0802,1.000);">Open POs</span>
<span id="t36" style="position:absolute;white-space:nowrap;line-height:1;top:192.26px;font-size:15.40px;font-weight:400;color:#22244b;-webkit-text-stroke:0.28px #22244b;left:1688.00px;transform-origin:0 84.6%;transform:scale(1.1212,1.000);">48</span>
<span id="t37" style="position:absolute;white-space:nowrap;line-height:1;top:450.10px;font-size:13.70px;font-weight:400;color:#8f919d;left:1417.70px;transform-origin:0 84.6%;transform:scale(1.0700,1.000);">0</span>
<span id="t38" style="position:absolute;white-space:nowrap;line-height:1;top:450.10px;font-size:13.70px;font-weight:400;color:#8f919d;left:1525.85px;transform-origin:0 84.6%;transform:scale(1.0700,1.000);">3K</span>
<span id="t39" style="position:absolute;white-space:nowrap;line-height:1;top:450.10px;font-size:13.70px;font-weight:400;color:#8f919d;left:1634.00px;transform-origin:0 84.6%;transform:scale(1.0700,1.000);">6K</span>
<span id="t40" style="position:absolute;white-space:nowrap;line-height:1;top:450.10px;font-size:13.70px;font-weight:400;color:#8f919d;left:1742.15px;transform-origin:0 84.6%;transform:scale(1.0700,1.000);">9K</span>
<span id="t41" style="position:absolute;white-space:nowrap;line-height:1;top:450.10px;font-size:13.70px;font-weight:400;color:#8f919d;left:1850.30px;transform-origin:0 84.6%;transform:scale(1.0700,1.000);">12K</span>
<span id="t42" style="position:absolute;white-space:nowrap;line-height:1;top:248.90px;font-size:13.70px;font-weight:400;color:#8f919d;right:592.20px;transform-origin:100% 84.6%;transform:scale(1.0700,1.000);">Jan</span>
<span id="t43" style="position:absolute;white-space:nowrap;line-height:1;top:265.03px;font-size:13.70px;font-weight:400;color:#8f919d;right:592.20px;transform-origin:100% 84.6%;transform:scale(1.0700,1.000);">Feb</span>
<span id="t44" style="position:absolute;white-space:nowrap;line-height:1;top:281.16px;font-size:13.70px;font-weight:400;color:#8f919d;right:592.20px;transform-origin:100% 84.6%;transform:scale(1.0700,1.000);">Mar</span>
<span id="t45" style="position:absolute;white-space:nowrap;line-height:1;top:297.29px;font-size:13.70px;font-weight:400;color:#8f919d;right:592.20px;transform-origin:100% 84.6%;transform:scale(1.0700,1.000);">Apr</span>
<span id="t46" style="position:absolute;white-space:nowrap;line-height:1;top:313.42px;font-size:13.70px;font-weight:400;color:#8f919d;right:592.20px;transform-origin:100% 84.6%;transform:scale(1.0700,1.000);">May</span>
<span id="t47" style="position:absolute;white-space:nowrap;line-height:1;top:329.55px;font-size:13.70px;font-weight:400;color:#8f919d;right:592.20px;transform-origin:100% 84.6%;transform:scale(1.0700,1.000);">Jun</span>
<span id="t48" style="position:absolute;white-space:nowrap;line-height:1;top:345.68px;font-size:13.70px;font-weight:400;color:#8f919d;right:592.20px;transform-origin:100% 84.6%;transform:scale(1.0700,1.000);">Jul</span>
<span id="t49" style="position:absolute;white-space:nowrap;line-height:1;top:361.81px;font-size:13.70px;font-weight:400;color:#8f919d;right:592.20px;transform-origin:100% 84.6%;transform:scale(1.0700,1.000);">Aug</span>
<span id="t50" style="position:absolute;white-space:nowrap;line-height:1;top:377.94px;font-size:13.70px;font-weight:400;color:#8f919d;right:592.20px;transform-origin:100% 84.6%;transform:scale(1.0700,1.000);">Sep</span>
<span id="t51" style="position:absolute;white-space:nowrap;line-height:1;top:394.07px;font-size:13.70px;font-weight:400;color:#8f919d;right:592.20px;transform-origin:100% 84.6%;transform:scale(1.0700,1.000);">Oct</span>
<span id="t52" style="position:absolute;white-space:nowrap;line-height:1;top:410.20px;font-size:13.70px;font-weight:400;color:#8f919d;right:592.20px;transform-origin:100% 84.6%;transform:scale(1.0700,1.000);">Nov</span>
<span id="t53" style="position:absolute;white-space:nowrap;line-height:1;top:426.33px;font-size:13.70px;font-weight:400;color:#8f919d;right:592.20px;transform-origin:100% 84.6%;transform:scale(1.0700,1.000);">Dec</span>
<span id="t54" style="position:absolute;white-space:nowrap;line-height:1;top:523.68px;font-size:15.50px;font-weight:400;color:#22244b;-webkit-text-stroke:0.55px #22244b;left:117.50px;transform-origin:0 84.6%;transform:scale(1.1014,1.000);">Number of Approved Orders</span>
<span id="t55" style="position:absolute;white-space:nowrap;line-height:1;top:556.55px;font-size:12.70px;font-weight:400;color:#7e7d92;left:117.50px;transform-origin:0 84.6%;transform:scale(1.1487,1.000);">Total</span>
<span id="t56" style="position:absolute;white-space:nowrap;line-height:1;top:575.36px;font-size:15.40px;font-weight:400;color:#22244b;-webkit-text-stroke:0.28px #22244b;left:117.80px;transform-origin:0 84.6%;transform:scale(1.0978,1.000);">39</span>
<span id="t57" style="position:absolute;white-space:nowrap;line-height:1;top:556.55px;font-size:12.70px;font-weight:400;color:#7e7d92;left:424.30px;transform-origin:0 84.6%;transform:scale(1.1423,1.000);">Average monthly</span>
<span id="t58" style="position:absolute;white-space:nowrap;line-height:1;top:575.36px;font-size:15.40px;font-weight:400;color:#22244b;-webkit-text-stroke:0.28px #22244b;left:424.30px;transform-origin:0 84.6%;transform:scale(1.0700,1.000);">5</span>
<span id="t59" style="position:absolute;white-space:nowrap;line-height:1;top:624.20px;font-size:13.70px;font-weight:400;color:#8f919d;right:1868.50px;transform-origin:100% 84.6%;transform:scale(1.0700,1.000);">10</span>
<span id="t60" style="position:absolute;white-space:nowrap;line-height:1;top:662.90px;font-size:13.70px;font-weight:400;color:#8f919d;right:1868.50px;transform-origin:100% 84.6%;transform:scale(1.0700,1.000);">8</span>
<span id="t61" style="position:absolute;white-space:nowrap;line-height:1;top:701.60px;font-size:13.70px;font-weight:400;color:#8f919d;right:1868.50px;transform-origin:100% 84.6%;transform:scale(1.0700,1.000);">6</span>
<span id="t62" style="position:absolute;white-space:nowrap;line-height:1;top:740.30px;font-size:13.70px;font-weight:400;color:#8f919d;right:1868.50px;transform-origin:100% 84.6%;transform:scale(1.0700,1.000);">4</span>
<span id="t63" style="position:absolute;white-space:nowrap;line-height:1;top:779.00px;font-size:13.70px;font-weight:400;color:#8f919d;right:1868.50px;transform-origin:100% 84.6%;transform:scale(1.0700,1.000);">2</span>
<span id="t64" style="position:absolute;white-space:nowrap;line-height:1;top:817.80px;font-size:13.70px;font-weight:400;color:#8f919d;right:1868.50px;transform-origin:100% 84.6%;transform:scale(1.0700,1.000);">0</span>
<span id="t65" style="position:absolute;white-space:nowrap;line-height:1;top:833.50px;font-size:13.70px;font-weight:400;color:#8f919d;left:163.80px;transform-origin:50% 84.6%;transform:translateX(-50%) scale(1.0700,1.000);">Jan</span>
<span id="t66" style="position:absolute;white-space:nowrap;line-height:1;top:833.50px;font-size:13.70px;font-weight:400;color:#8f919d;left:209.95px;transform-origin:50% 84.6%;transform:translateX(-50%) scale(1.0700,1.000);">Feb</span>
<span id="t67" style="position:absolute;white-space:nowrap;line-height:1;top:833.50px;font-size:13.70px;font-weight:400;color:#8f919d;left:256.10px;transform-origin:50% 84.6%;transform:translateX(-50%) scale(1.0700,1.000);">Mar</span>
<span id="t68" style="position:absolute;white-space:nowrap;line-height:1;top:833.50px;font-size:13.70px;font-weight:400;color:#8f919d;left:302.25px;transform-origin:50% 84.6%;transform:translateX(-50%) scale(1.0700,1.000);">Apr</span>
<span id="t69" style="position:absolute;white-space:nowrap;line-height:1;top:833.50px;font-size:13.70px;font-weight:400;color:#8f919d;left:348.40px;transform-origin:50% 84.6%;transform:translateX(-50%) scale(1.0700,1.000);">May</span>
<span id="t70" style="position:absolute;white-space:nowrap;line-height:1;top:833.50px;font-size:13.70px;font-weight:400;color:#8f919d;left:394.55px;transform-origin:50% 84.6%;transform:translateX(-50%) scale(1.0700,1.000);">Jun</span>
<span id="t71" style="position:absolute;white-space:nowrap;line-height:1;top:833.50px;font-size:13.70px;font-weight:400;color:#8f919d;left:440.70px;transform-origin:50% 84.6%;transform:translateX(-50%) scale(1.0700,1.000);">Jul</span>
<span id="t72" style="position:absolute;white-space:nowrap;line-height:1;top:833.50px;font-size:13.70px;font-weight:400;color:#8f919d;left:486.85px;transform-origin:50% 84.6%;transform:translateX(-50%) scale(1.0700,1.000);">Aug</span>
<span id="t73" style="position:absolute;white-space:nowrap;line-height:1;top:833.50px;font-size:13.70px;font-weight:400;color:#8f919d;left:533.00px;transform-origin:50% 84.6%;transform:translateX(-50%) scale(1.0700,1.000);">Sep</span>
<span id="t74" style="position:absolute;white-space:nowrap;line-height:1;top:833.50px;font-size:13.70px;font-weight:400;color:#8f919d;left:579.15px;transform-origin:50% 84.6%;transform:translateX(-50%) scale(1.0700,1.000);">Oct</span>
<span id="t75" style="position:absolute;white-space:nowrap;line-height:1;top:833.50px;font-size:13.70px;font-weight:400;color:#8f919d;left:625.30px;transform-origin:50% 84.6%;transform:translateX(-50%) scale(1.0700,1.000);">Nov</span>
<span id="t76" style="position:absolute;white-space:nowrap;line-height:1;top:833.50px;font-size:13.70px;font-weight:400;color:#8f919d;left:671.45px;transform-origin:50% 84.6%;transform:translateX(-50%) scale(1.0700,1.000);">Dec</span>
<span id="t77" style="position:absolute;white-space:nowrap;line-height:1;top:523.68px;font-size:15.50px;font-weight:400;color:#22244b;-webkit-text-stroke:0.55px #22244b;left:749.00px;transform-origin:0 84.6%;transform:scale(1.1099,1.000);">Committed vs. Accrued vs. Invoiced</span>
<span id="t78" style="position:absolute;white-space:nowrap;line-height:1;top:556.55px;font-size:12.70px;font-weight:400;color:#7e7d92;left:749.00px;transform-origin:0 84.6%;transform:scale(1.1487,1.000);">Total</span>
<span id="t79" style="position:absolute;white-space:nowrap;line-height:1;top:575.36px;font-size:15.40px;font-weight:400;color:#22244b;-webkit-text-stroke:0.28px #22244b;left:749.00px;transform-origin:0 84.6%;transform:scale(1.0831,1.000);">20,575.35 USD</span>
<span id="t80" style="position:absolute;white-space:nowrap;line-height:1;top:556.55px;font-size:12.70px;font-weight:400;color:#7e7d92;left:1069.50px;transform-origin:0 84.6%;transform:scale(1.1574,1.000);">Committed</span>
<span id="t81" style="position:absolute;white-space:nowrap;line-height:1;top:575.36px;font-size:15.40px;font-weight:400;color:#22244b;-webkit-text-stroke:0.28px #22244b;left:1051.50px;transform-origin:0 84.6%;transform:scale(1.0423,1.000);">10,800.01 USD</span>
<span id="t82" style="position:absolute;white-space:nowrap;line-height:1;top:556.55px;font-size:12.70px;font-weight:400;color:#7e7d92;left:1371.80px;transform-origin:0 84.6%;transform:scale(1.1601,1.000);">Accrued</span>
<span id="t83" style="position:absolute;white-space:nowrap;line-height:1;top:575.36px;font-size:15.40px;font-weight:400;color:#22244b;-webkit-text-stroke:0.28px #22244b;left:1354.30px;transform-origin:0 84.6%;transform:scale(1.0664,1.000);">4,896 USD</span>
<span id="t84" style="position:absolute;white-space:nowrap;line-height:1;top:556.55px;font-size:12.70px;font-weight:400;color:#7e7d92;left:1674.00px;transform-origin:0 84.6%;transform:scale(1.1509,1.000);">Invoiced</span>
<span id="t85" style="position:absolute;white-space:nowrap;line-height:1;top:575.36px;font-size:15.40px;font-weight:400;color:#22244b;-webkit-text-stroke:0.28px #22244b;left:1656.40px;transform-origin:0 84.6%;transform:scale(1.0736,1.000);">4,879.34 USD</span>
<span id="t86" style="position:absolute;white-space:nowrap;line-height:1;top:624.20px;font-size:13.70px;font-weight:400;color:#8f919d;right:1234.00px;transform-origin:100% 84.6%;transform:scale(1.0700,1.000);">5K</span>
<span id="t87" style="position:absolute;white-space:nowrap;line-height:1;top:662.90px;font-size:13.70px;font-weight:400;color:#8f919d;right:1234.00px;transform-origin:100% 84.6%;transform:scale(1.0700,1.000);">4K</span>
<span id="t88" style="position:absolute;white-space:nowrap;line-height:1;top:701.60px;font-size:13.70px;font-weight:400;color:#8f919d;right:1234.00px;transform-origin:100% 84.6%;transform:scale(1.0700,1.000);">3K</span>
<span id="t89" style="position:absolute;white-space:nowrap;line-height:1;top:740.30px;font-size:13.70px;font-weight:400;color:#8f919d;right:1234.00px;transform-origin:100% 84.6%;transform:scale(1.0700,1.000);">2K</span>
<span id="t90" style="position:absolute;white-space:nowrap;line-height:1;top:779.00px;font-size:13.70px;font-weight:400;color:#8f919d;right:1234.00px;transform-origin:100% 84.6%;transform:scale(1.0700,1.000);">1K</span>
<span id="t91" style="position:absolute;white-space:nowrap;line-height:1;top:817.80px;font-size:13.70px;font-weight:400;color:#8f919d;right:1234.00px;transform-origin:100% 84.6%;transform:scale(1.0700,1.000);">0</span>
<span id="t92" style="position:absolute;white-space:nowrap;line-height:1;top:833.50px;font-size:13.70px;font-weight:400;color:#8f919d;left:824.90px;transform-origin:50% 84.6%;transform:translateX(-50%) scale(1.0700,1.000);">Jan</span>
<span id="t93" style="position:absolute;white-space:nowrap;line-height:1;top:833.50px;font-size:13.70px;font-weight:400;color:#8f919d;left:923.50px;transform-origin:50% 84.6%;transform:translateX(-50%) scale(1.0700,1.000);">Feb</span>
<span id="t94" style="position:absolute;white-space:nowrap;line-height:1;top:833.50px;font-size:13.70px;font-weight:400;color:#8f919d;left:1022.10px;transform-origin:50% 84.6%;transform:translateX(-50%) scale(1.0700,1.000);">Mar</span>
<span id="t95" style="position:absolute;white-space:nowrap;line-height:1;top:833.50px;font-size:13.70px;font-weight:400;color:#8f919d;left:1120.70px;transform-origin:50% 84.6%;transform:translateX(-50%) scale(1.0700,1.000);">Apr</span>
<span id="t96" style="position:absolute;white-space:nowrap;line-height:1;top:833.50px;font-size:13.70px;font-weight:400;color:#8f919d;left:1219.30px;transform-origin:50% 84.6%;transform:translateX(-50%) scale(1.0700,1.000);">May</span>
<span id="t97" style="position:absolute;white-space:nowrap;line-height:1;top:833.50px;font-size:13.70px;font-weight:400;color:#8f919d;left:1317.90px;transform-origin:50% 84.6%;transform:translateX(-50%) scale(1.0700,1.000);">Jun</span>
<span id="t98" style="position:absolute;white-space:nowrap;line-height:1;top:833.50px;font-size:13.70px;font-weight:400;color:#8f919d;left:1416.50px;transform-origin:50% 84.6%;transform:translateX(-50%) scale(1.0700,1.000);">Jul</span>
<span id="t99" style="position:absolute;white-space:nowrap;line-height:1;top:833.50px;font-size:13.70px;font-weight:400;color:#8f919d;left:1515.10px;transform-origin:50% 84.6%;transform:translateX(-50%) scale(1.0700,1.000);">Aug</span>
<span id="t100" style="position:absolute;white-space:nowrap;line-height:1;top:833.50px;font-size:13.70px;font-weight:400;color:#8f919d;left:1613.70px;transform-origin:50% 84.6%;transform:translateX(-50%) scale(1.0700,1.000);">Sep</span>
<span id="t101" style="position:absolute;white-space:nowrap;line-height:1;top:833.50px;font-size:13.70px;font-weight:400;color:#8f919d;left:1712.30px;transform-origin:50% 84.6%;transform:translateX(-50%) scale(1.0700,1.000);">Oct</span>
<span id="t102" style="position:absolute;white-space:nowrap;line-height:1;top:833.50px;font-size:13.70px;font-weight:400;color:#8f919d;left:1810.90px;transform-origin:50% 84.6%;transform:translateX(-50%) scale(1.0700,1.000);">Nov</span>
<span id="t103" style="position:absolute;white-space:nowrap;line-height:1;top:833.50px;font-size:13.70px;font-weight:400;color:#8f919d;left:1909.50px;transform-origin:50% 84.6%;transform:translateX(-50%) scale(1.0700,1.000);">Dec</span>
<span id="t104" style="position:absolute;white-space:nowrap;line-height:1;top:907.38px;font-size:15.50px;font-weight:400;color:#22244b;-webkit-text-stroke:0.55px #22244b;left:117.50px;transform-origin:0 84.6%;transform:scale(1.0815,1.000);">Spend vs. Budget:</span>
<span id="t105" style="position:absolute;white-space:nowrap;line-height:1;top:907.38px;font-size:15.50px;font-weight:400;color:#3f51c6;-webkit-text-stroke:0.55px #3f51c6;left:260.60px;transform-origin:0 84.6%;transform:scale(1.0775,1.000);">Holiday Expenses</span>
<span id="t106" style="position:absolute;white-space:nowrap;line-height:1;top:851.93px;font-size:13.20px;font-weight:400;color:#fff;-webkit-text-stroke:0.30px #fff;left:1835.20px;transform-origin:50% 84.6%;transform:translateX(-50%) scale(0.9951,1.000);">12</span>
</body></html>
